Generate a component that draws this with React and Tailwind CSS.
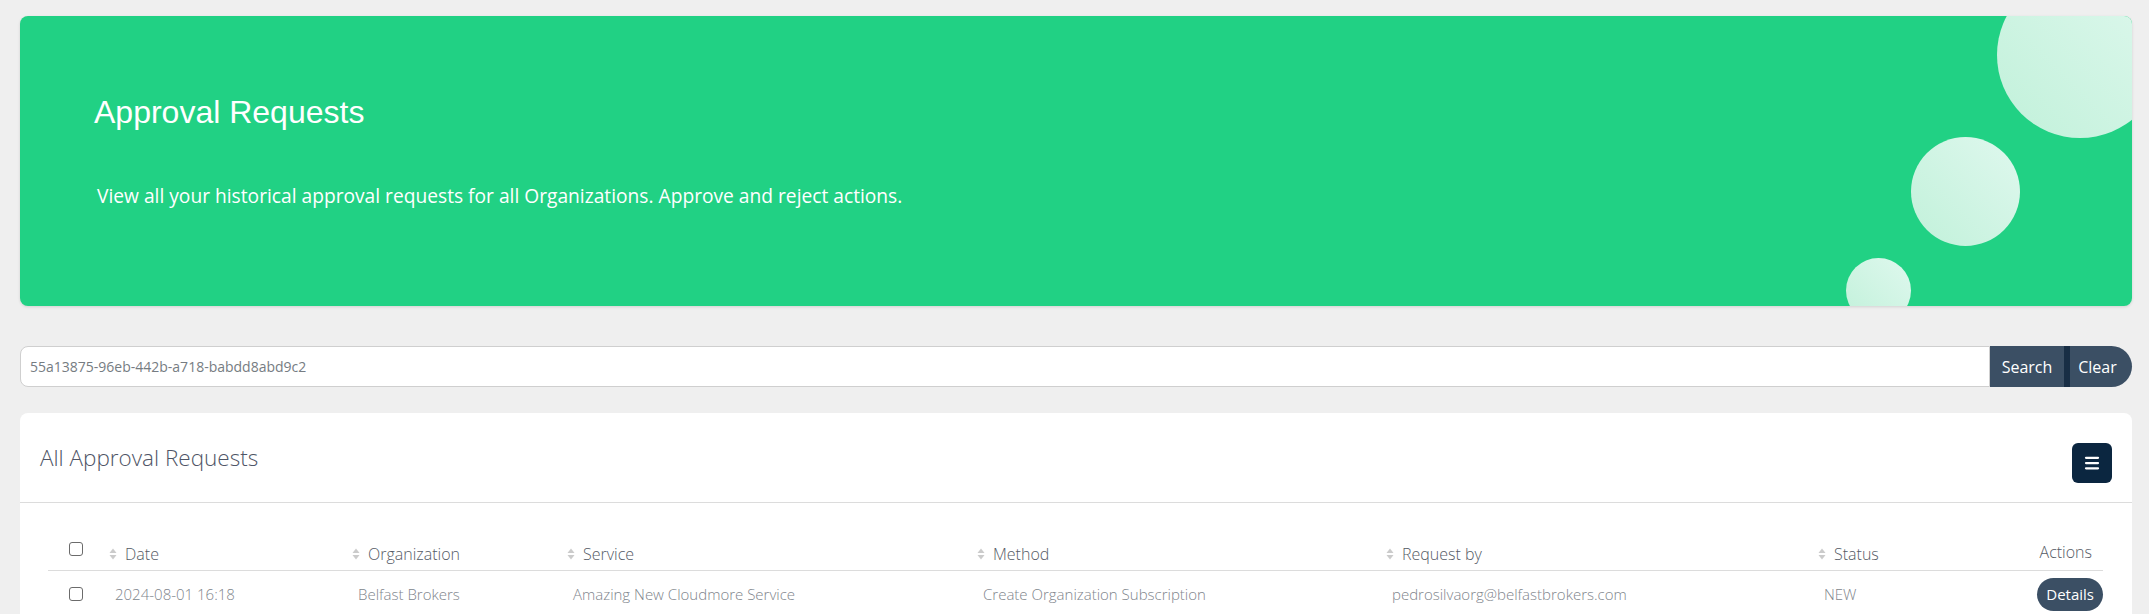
import { Menu } from "lucide-react";

const columns = [
  { key: "date", label: "Date" },
  { key: "org", label: "Organization" },
  { key: "service", label: "Service" },
  { key: "method", label: "Method" },
  { key: "by", label: "Request by" },
  { key: "status", label: "Status" },
];

const rows = [
  {
    id: 1,
    date: "2024-08-01 16:18",
    org: "Belfast Brokers",
    service: "Amazing New Cloudmore Service",
    method: "Create Organization Subscription",
    by: "pedrosilvaorg@belfastbrokers.com",
    status: "NEW",
  },
];

function SortIcon() {
  return (
    <svg width="8" height="12" viewBox="0 0 8 12" className="shrink-0">
      <path d="M4 0.5 L7.5 5 L0.5 5 Z" fill="#cbcbcb" />
      <path d="M4 11.5 L7.5 7 L0.5 7 Z" fill="#cbcbcb" />
    </svg>
  );
}

function Checkbox() {
  return <span className="block w-[14px] h-[14px] rounded-[3px] border-[1.5px] border-[#6b6b6b] bg-white" />;
}

function Bubble({ className }) {
  return <div className={`absolute rounded-full bg-linear-to-bl from-[#dff8ee] to-[#c1f1da] ${className}`} />;
}

export default function App() {
  return (
    <div className="min-h-screen bg-[#efefef] pl-5 pr-[17px] pt-4 font-['Open_Sans',sans-serif]">
      {/* banner */}
      <div className="relative h-[290px] overflow-hidden rounded-lg bg-[#21d184] shadow-[0_1px_3px_rgba(0,0,0,0.12)]">
        <Bubble className="w-[166px] h-[166px] right-[-31px] top-[-44px]" />
        <Bubble className="w-[109px] h-[109px] right-[112px] top-[121px]" />
        <Bubble className="w-[65px] h-[65px] right-[221px] top-[242px]" />
        <div className="relative pl-[74px] pt-[77px]">
          <h1 className="font-['Liberation_Sans',Arial,sans-serif] text-[32px] leading-[38px] text-white">
            Approval Requests
          </h1>
          <p className="mt-[51px] ml-[3px] text-[19.2px] leading-[28px] text-white">
            View all your historical approval requests for all Organizations. Approve and reject actions.
          </p>
        </div>
      </div>

      {/* search */}
      <div className="mt-10 flex h-[41px]">
        <div className="flex flex-1 items-center rounded-l-lg border border-[#cfcfcf] bg-white pl-[9px] text-[14px] text-[#767c82]">
          55a13875-96eb-442b-a718-babdd8abd9c2
        </div>
        <button className="w-[74px] bg-[#3b4f64] text-[16px] font-medium text-white">Search</button>
        <button className="w-[68px] rounded-r-full border-l-[6px] border-[#182e45] bg-[#3b4f64] pr-[7px] text-[16px] font-medium text-white">
          Clear
        </button>
      </div>

      {/* card */}
      <div className="mt-[26px] rounded-t-lg bg-white pb-4">
        <div className="flex h-[90px] items-center justify-between border-b border-[#dcdcdc] px-5">
          <h2 className="text-[22.5px] font-light text-[#4f5566]">All Approval Requests</h2>
          <button className="mt-[10px] flex h-10 w-10 items-center justify-center rounded-md bg-[#0b2640] text-white">
            <Menu size={18} strokeWidth={3} />
          </button>
        </div>

        <div className="pl-7 pr-[29px] pt-[31px]">
          <div className="grid h-[37px] grid-cols-[57px_243px_215px_410px_409px_432px_179px_1fr] items-center border-b border-[#dcdcdc] text-[16px] font-light text-[#555b66]">
            <div className="pb-[7px] pl-[21px]">
              <Checkbox />
            </div>
            {columns.map((c) => (
              <div key={c.key} className="flex items-center gap-2 pl-1 pt-1">
                <SortIcon />
                <span>{c.label}</span>
              </div>
            ))}
            <div className="pr-[11px] text-right">Actions</div>
          </div>

          {rows.map((r) => (
            <div
              key={r.id}
              className="grid h-[46px] grid-cols-[57px_243px_215px_410px_409px_432px_179px_1fr] items-center text-[15px] font-light text-[#80858c]"
            >
              <div className="pl-[21px]">
                <Checkbox />
              </div>
              {columns.map((c) => (
                <div key={c.key} className="pl-[10px]">
                  {r[c.key]}
                </div>
              ))}
              <div className="flex justify-end">
                <button className="h-[33px] rounded-full bg-[#3b4f64] px-[9px] text-[15px] font-medium text-white">
                  Details
                </button>
              </div>
            </div>
          ))}
        </div>
      </div>
    </div>
  );
}
